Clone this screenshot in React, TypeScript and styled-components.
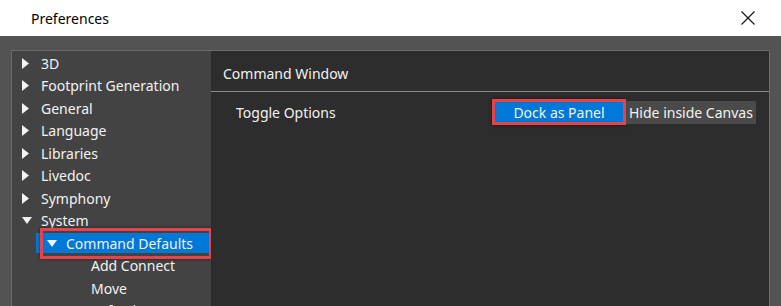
import React from "react";
import styled, { createGlobalStyle } from "styled-components";

const Global = createGlobalStyle`
  html, body { margin: 0; padding: 0; }
  body {
    background: #535353;
    font-family: "Noto Sans", "Open Sans", sans-serif;
    overflow: hidden;
  }
`;

const Window = styled.div`
  width: 781px;
  height: 306px;
  display: flex;
  flex-direction: column;
  background: #535353;
`;

const TitleBar = styled.div`
  height: 36px;
  flex: none;
  background: #ffffff;
  display: flex;
  align-items: center;
  justify-content: space-between;
  padding: 0 25px 0 31px;
  box-sizing: border-box;
`;

const Title = styled.span`
  font-size: 14px;
  color: #000;
`;

const CloseButton = styled.div`
  width: 16px;
  height: 16px;
  display: flex;
  align-items: center;
  justify-content: center;
`;

const Body = styled.div`
  flex: 1;
  padding: 14px 11px 0 11px;
  display: flex;
  min-height: 0;
`;

const Frame = styled.div`
  flex: 1;
  display: flex;
  border: 1px solid #6c6c6c;
  border-bottom: none;
  min-height: 0;
`;

const Tree = styled.div`
  width: 199px;
  flex: none;
  background: #434343;
  padding-top: 1px;
  overflow: hidden;
`;

const Row = styled.div<{ $level: number }>`
  position: relative;
  height: 22.5px;
  display: flex;
  align-items: center;
  padding-left: ${(p) => 10 + p.$level * 25}px;
  font-size: 14px;
  color: #f2f2f2;
  white-space: nowrap;
`;

const RowInner = styled.div<{ $selected?: boolean }>`
  display: flex;
  align-items: center;
  height: 20px;
  flex: ${(p) => (p.$selected ? 1 : "none")};
  background: ${(p) => (p.$selected ? "#0078d7" : "transparent")};
  margin-left: ${(p) => (p.$selected ? "-11px" : "0")};
  padding-left: ${(p) => (p.$selected ? "11px" : "0")};
`;

const Arrow = styled.span`
  width: 19px;
  flex: none;
  display: flex;
  align-items: center;
  justify-content: flex-start;
`;

const Highlight = styled.div`
  position: absolute;
  left: 28px;
  right: -1px;
  top: -4px;
  bottom: -4px;
  border: 3px solid #e8434b;
  box-shadow: 0 0 3px rgba(0, 0, 0, 0.55);
  pointer-events: none;
`;

const Panel = styled.div`
  flex: 1;
  background: #2d2d2d;
  display: flex;
  flex-direction: column;
`;

const PanelHeader = styled.div`
  height: 41px;
  box-sizing: border-box;
  display: flex;
  align-items: center;
  padding: 4px 0 0 12px;
  font-size: 14px;
  color: #f2f2f2;
  border-bottom: 1px solid #8a8a8a;
`;

const OptionRow = styled.div`
  height: 40px;
  display: flex;
  align-items: center;
  padding-left: 25px;
`;

const OptionLabel = styled.span`
  width: 256px;
  font-size: 14px;
  color: #f2f2f2;
`;

const Toggle = styled.div`
  display: flex;
  align-items: center;
`;

const ToggleButton = styled.div<{ $active?: boolean; $marked?: boolean }>`
  height: ${(p) => (p.$marked ? "20px" : "23px")};
  box-sizing: content-box;
  display: flex;
  align-items: center;
  justify-content: ${(p) => (p.$active ? "center" : "flex-start")};
  width: ${(p) => (p.$active ? "128px" : "127px")};
  padding-left: ${(p) => (p.$active ? "0" : "3px")};
  background: ${(p) => (p.$active ? "#0078d7" : "#4a4a4a")};
  border: ${(p) => (p.$marked ? "3px solid #e8434b" : "none")};
  box-shadow: ${(p) => (p.$marked ? "0 0 3px rgba(0,0,0,0.55)" : "none")};
  font-size: 14px;
  color: #f2f2f2;
  white-space: nowrap;
  overflow: hidden;
`;

const Right = () => (
  <svg width="7" height="11" viewBox="0 0 7 11">
    <path d="M0 0 L7 5.5 L0 11 Z" fill="#f4f4f4" />
  </svg>
);

const Down = () => (
  <svg width="10" height="7" viewBox="0 0 10 7">
    <path d="M0 0 L10 0 L5 7 Z" fill="#f4f4f4" />
  </svg>
);

type Item = { label: string; level: number; arrow?: "right" | "down"; selected?: boolean };

const items: Item[] = [
  { label: "3D", level: 0, arrow: "right" },
  { label: "Footprint Generation", level: 0, arrow: "right" },
  { label: "General", level: 0, arrow: "right" },
  { label: "Language", level: 0, arrow: "right" },
  { label: "Libraries", level: 0, arrow: "right" },
  { label: "Livedoc", level: 0, arrow: "right" },
  { label: "Symphony", level: 0, arrow: "right" },
  { label: "System", level: 0, arrow: "down" },
  { label: "Command Defaults", level: 1, arrow: "down", selected: true },
  { label: "Add Connect", level: 2 },
  { label: "Move", level: 2 },
  { label: "Refresh", level: 2 },
];

export default function App() {
  return (
    <Window>
      <Global />
      <TitleBar>
        <Title>Preferences</Title>
        <CloseButton>
          <svg width="14" height="14" viewBox="0 0 14 14">
            <path d="M0.5 0.5 L13.5 13.5 M13.5 0.5 L0.5 13.5" stroke="#111" strokeWidth="1.1" fill="none" />
          </svg>
        </CloseButton>
      </TitleBar>
      <Body>
        <Frame>
          <Tree>
            {items.map((it) => (
              <Row key={it.label} $level={it.level}>
                <RowInner $selected={it.selected}>
                  {it.arrow && <Arrow>{it.arrow === "right" ? <Right /> : <Down />}</Arrow>}
                  {!it.arrow && <Arrow />}
                  {it.label}
                </RowInner>
                {it.selected && <Highlight />}
              </Row>
            ))}
          </Tree>
          <Panel>
            <PanelHeader>Command Window</PanelHeader>
            <OptionRow>
              <OptionLabel>Toggle Options</OptionLabel>
              <Toggle>
                <ToggleButton $active $marked>Dock as Panel</ToggleButton>
                <ToggleButton>Hide inside Canvas</ToggleButton>
              </Toggle>
            </OptionRow>
          </Panel>
        </Frame>
      </Body>
    </Window>
  );
}
